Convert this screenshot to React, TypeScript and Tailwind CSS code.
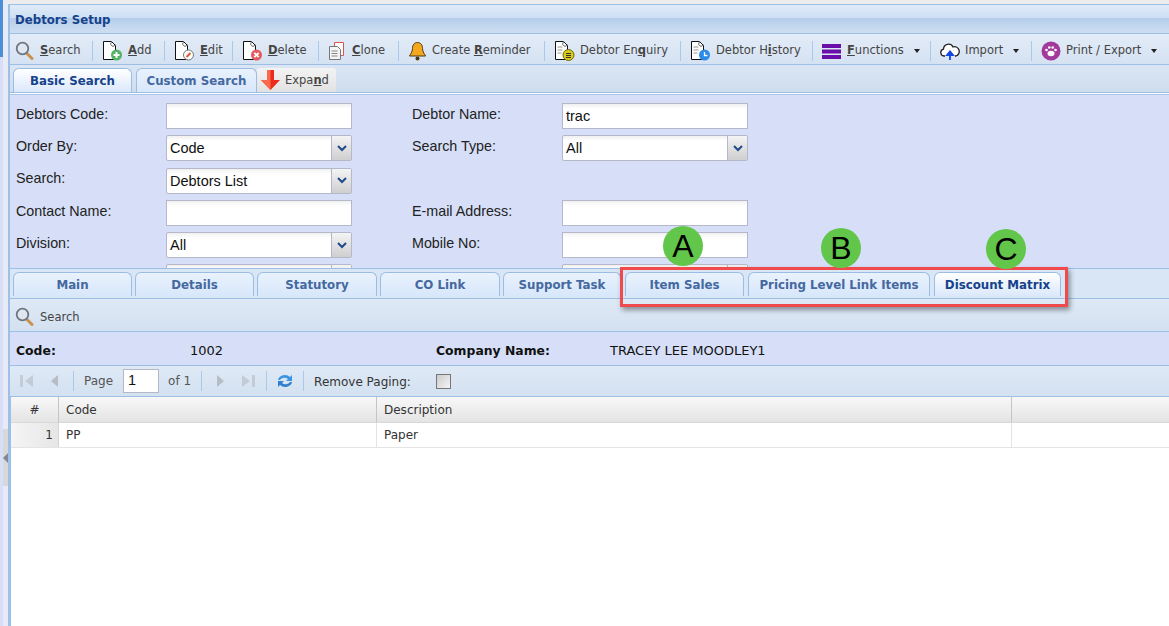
// App.tsx
const Doc = ({ children }: { children?: React.ReactNode }) => (
  <svg width="21" height="21" viewBox="0 0 21 21" className="shrink-0">
    <path d="M1.500 1.500h8l4 4v14h-12z" fill="#fff" stroke="#111" strokeWidth="1" />
    <path d="M9.500 1.500l-1 3 2.500 2 2.500-1.500" fill="none" stroke="#666" strokeWidth="1" />
    {children}
  </svg>
);

const SearchIcon = () => (
  <svg width="20" height="20" viewBox="0 0 20 20" className="shrink-0">
    <path d="M11.500 12l5.500 5.500" stroke="#c9924f" strokeWidth="3" strokeLinecap="round" />
    <circle cx="7.500" cy="7.500" r="5.800" fill="#dfe8f0" stroke="#6d7680" strokeWidth="1.800" />
  </svg>
);

const Caret = () => (
  <span className="ml-[10px] h-0 w-0 border-x-[3.5px] border-t-[4px] border-x-transparent border-t-[#222]" />
);

const U = ({ children }: { children: string }) => (
  <span className="font-bold underline">{children}</span>
);

const toolbar = [
  {
    w: "w-[78px]",
    icon: <SearchIcon />,
    label: (
      <>
        <U>S</U>earch
      </>
    ),
  },
  {
    w: "w-[72px]",
    icon: (
      <Doc>
        <circle cx="14.500" cy="15" r="5.500" fill="#52b365" />
        <path d="M14.500 12v6M11.500 15h6" stroke="#fff" strokeWidth="2" />
      </Doc>
    ),
    label: (
      <>
        <U>A</U>dd
      </>
    ),
  },
  {
    w: "w-[68px]",
    icon: (
      <Doc>
        <circle cx="14.500" cy="15" r="5" fill="#fff" stroke="#777" />
        <path d="M12.500 17l4-4" stroke="#e2572b" strokeWidth="2" />
      </Doc>
    ),
    label: (
      <>
        <U>E</U>dit
      </>
    ),
  },
  {
    w: "w-[86px]",
    icon: (
      <Doc>
        <circle cx="14.500" cy="15" r="5.500" fill="#e55a5f" />
        <path d="M12.300 12.800l4.400 4.400M16.700 12.800l-4.400 4.400" stroke="#fff" strokeWidth="1.800" />
      </Doc>
    ),
    label: (
      <>
        <U>D</U>elete
      </>
    ),
  },
  {
    w: "w-[80px]",
    icon: (
      <svg width="19" height="20" viewBox="0 0 19 20" className="shrink-0">
        <path d="M6.500 1.500h9v13h-9z" fill="#fff" stroke="#d9534f" />
        <path d="M1.500 5.500h8l3 3v10h-11z" fill="#f4f4f4" stroke="#777" />
        <path d="M3.500 10h6M3.500 12.500h6M3.500 15h6" stroke="#888" />
      </svg>
    ),
    label: (
      <>
        <U>C</U>lone
      </>
    ),
  },
  {
    w: "w-[146px]",
    icon: (
      <svg width="19" height="20" viewBox="0 0 19 20" className="shrink-0">
        <path
          d="M9.500 1.500c3.500 0 5 2.800 5 6 0 3.500 2 5.500 3 7.500h-16c1-2 3-4 3-7.500 0-3.200 1.500-6 5-6z"
          fill="#f5a81c"
          stroke="#4a3a12"
        />
        <circle cx="9.500" cy="17.500" r="2" fill="#4a3a12" />
      </svg>
    ),
    label: (
      <>
        Create <U>R</U>eminder
      </>
    ),
  },
  {
    w: "w-[136px]",
    icon: (
      <Doc>
        <path d="M3.500 7h5M3.500 10h5M3.500 13h4" stroke="#999" />
        <circle cx="14.500" cy="15" r="5.500" fill="#d8cb1c" stroke="#6e6a10" />
        <path d="M12 13.500h5M12 15.500h5M12 17.500h5" stroke="#333" />
      </Doc>
    ),
    label: (
      <>
        Debtor En<U>q</U>uiry
      </>
    ),
  },
  {
    w: "w-[132px]",
    icon: (
      <Doc>
        <path d="M3.500 7h5M3.500 10h5M3.500 13h4" stroke="#999" />
        <circle cx="14.500" cy="15" r="5.500" fill="#2a8be8" />
        <path d="M14.500 12v3.500h3" stroke="#fff" strokeWidth="1.300" fill="none" />
      </Doc>
    ),
    label: (
      <>
        Debtor H<U>i</U>story
      </>
    ),
  },
  {
    w: "w-[118px]",
    icon: (
      <svg width="20" height="20" viewBox="0 0 20 20" className="shrink-0">
        <path d="M0 3h19v4H0zM0 8.500h19v4H0zM0 14h19v4H0z" fill="#6a0ea8" />
      </svg>
    ),
    label: (
      <>
        <U>F</U>unctions
      </>
    ),
    caret: true,
  },
  {
    w: "w-[101px]",
    icon: (
      <svg width="20" height="20" viewBox="0 0 20 20" className="shrink-0">
        <path
          d="M5 15H4a3.500 3.500 0 0 1-.5-6.900A5 5 0 0 1 13 6a4.500 4.500 0 0 1 3 9h-1"
          fill="#fff"
          stroke="#222"
          strokeWidth="1.300"
        />
        <path d="M10 19v-7M7 14l3-3.500 3 3.500z" stroke="#1446e0" strokeWidth="1.800" fill="#1446e0" />
      </svg>
    ),
    label: <>Import</>,
    caret: true,
  },
  {
    w: "w-[136px]",
    icon: (
      <svg width="20" height="20" viewBox="0 0 20 20" className="shrink-0">
        <circle cx="10" cy="10" r="9.500" fill="#a3399b" />
        <ellipse cx="10" cy="12.500" rx="3.500" ry="2.800" fill="#fff" />
        <circle cx="5.500" cy="9" r="1.300" fill="#fff" />
        <circle cx="8.300" cy="6.500" r="1.300" fill="#fff" />
        <circle cx="11.700" cy="6.500" r="1.300" fill="#fff" />
        <circle cx="14.500" cy="9" r="1.300" fill="#fff" />
      </svg>
    ),
    label: <>Print / Export</>,
    caret: true,
    last: true,
  },
];

const Input = ({ value = "" }: { value?: string }) => (
  <div className="flex h-[26px] w-[186px] items-center border border-[#b5b8c8] bg-gradient-to-b from-[#f0f0f0] to-white to-[20%] px-[3px] pt-[2px] text-[14.5px] text-[#111]">
    {value}
  </div>
);

const Select = ({ value }: { value: string }) => (
  <div className="flex h-[26px] w-[186px] items-center rounded-[2px] border border-[#b5b8c8] bg-gradient-to-b from-[#f0f0f0] to-white to-[20%] pl-[3px] text-[14.5px] text-[#111]">
    <span className="flex-1 pt-[2px]">{value}</span>
    <span className="flex h-full w-[20px] items-center justify-center border-l border-[#b5b8c8] bg-gradient-to-b from-[#f4f4f4] to-[#cfcfcf]">
      <svg width="10" height="7" viewBox="0 0 10 7">
        <path d="M1 1l4 4 4-4" fill="none" stroke="#1f4a8c" strokeWidth="2" />
      </svg>
    </span>
  </div>
);

const Label = ({ children, className = "" }: { children?: string; className?: string }) => (
  <div className={`-mt-[3px] text-[14.3px] text-[#222] ${className}`}>{children}</div>
);

const bottomTabs = [
  { name: "Main", w: "w-[119px]" },
  { name: "Details", w: "w-[119px]" },
  { name: "Statutory", w: "w-[120px]" },
  { name: "CO Link", w: "w-[120px]" },
  { name: "Support Task", w: "w-[118px]" },
  { name: "Item Sales", w: "w-[119px]", ml: "ml-[4px]" },
  { name: "Pricing Level Link Items", w: "w-[182px]", ml: "ml-[4px]" },
  { name: "Discount Matrix", w: "w-[127px]", ml: "ml-[4px]", active: true },
];

const Tab = ({
  name,
  w,
  ml = "",
  active = false,
}: {
  name: string;
  w: string;
  ml?: string;
  active?: boolean;
}) => (
  <div
    className={`flex h-[24px] items-center justify-center rounded-t-[6px] border border-b-0 border-[#9dbce4] bg-gradient-to-b pt-[2px] text-[11.8px] font-bold ${w} ${ml} ${
      active ? "from-white to-[#dbe8fb] text-[#15428b]" : "from-[#e9f2fd] to-[#d8e7fb] text-[#44689f]"
    }`}
  >
    {name}
  </div>
);

const Sep = ({ ml }: { ml: string }) => <span className={`h-[20px] w-px bg-[#a9c8ec] ${ml}`} />;

export default function App() {
  return (
    <div className="relative flex h-[626px] w-[1169px] overflow-hidden bg-[#ececec] font-['Liberation_Sans',sans-serif]">
      {/* left strip */}
      <div className="flex w-[8px] shrink-0">
        <div className="flex w-[3px] flex-col bg-[#d6dff7]">
          <div className="h-[57px] bg-[#4a90d9]" />
        </div>
        <div className="flex w-[5px] flex-col bg-[#e8eaf5] pt-[429px]">
          <div className="flex h-[57px] items-center justify-center bg-[#d8d8d8]">
            <span className="h-0 w-0 border-y-[5px] border-r-[5px] border-y-transparent border-r-[#7f8894]" />
          </div>
        </div>
      </div>

      <div className="mt-[4px] flex min-w-0 flex-1 flex-col border-t border-l-2 border-[#9dc0e8] bg-white">
        {/* title */}
        <div className="flex h-[28px] shrink-0 items-center bg-[linear-gradient(180deg,#e0ebf8_0%,#cddff3_46%,#b5cdeb_47%,#cfdff2_100%)] pl-[5px] pt-[3px] font-['DejaVu_Sans',sans-serif] text-[11.75px] font-bold text-[#15428b]">
          Debtors Setup
        </div>

        {/* toolbar */}
        <div className="flex h-[32px] shrink-0 items-center border-y border-[#9dbfe6] bg-gradient-to-b from-[#e3ecf8] to-[#d5e2f2] pl-[5px] pt-[3px] font-['DejaVu_Sans',sans-serif] text-[11.5px] text-[#444]">
          {toolbar.map((item, i) => (
            <div key={i} className={`flex h-[20px] shrink-0 items-center ${item.w} ${item.last ? "" : "border-r border-[#a9c8ec]"} ${i ? "pl-[9px]" : ""}`}>
              {item.icon}
              <span className="ml-[5px] whitespace-nowrap pt-[1px]">{item.label}</span>
              {item.caret && <Caret />}
            </div>
          ))}
        </div>

        {/* search tabs */}
        <div className="flex h-[28px] shrink-0 items-end border-b border-[#9dbfe6] bg-gradient-to-b from-[#dae6f4] to-[#cedded] pl-[3px] font-['DejaVu_Sans',sans-serif]">
          <Tab name="Basic Search" w="w-[119px]" active />
          <Tab name="Custom Search" w="w-[121px]" ml="ml-[4px]" />
          <div className="flex h-[24px] w-[79px] items-center rounded-t-[3px] bg-gradient-to-b from-[#f3f3f3] to-[#e2e2e2] pl-[4px] text-[11.5px] text-[#444]">
            <svg width="20" height="22" viewBox="0 0 20 22" className="shrink-0">
              <path d="M6 1h7v10h6l-9.500 10L0 11h6z" fill="#ee2a1c" />
              <path d="M6 1h3.500v20L0 11h6z" fill="#f86a4c" />
            </svg>
            <span className="ml-[4px] pt-[2px]">
              Expa<U>n</U>d
            </span>
          </div>
        </div>

        {/* form */}
        <div className="mt-[1px] flex h-[174px] shrink-0 flex-col gap-[6.3px] overflow-hidden border-t border-[#a9c8ec] bg-[#d6dff7] pl-[6px] pt-[8px]">
          <div className="flex h-[26px] shrink-0 items-center">
            <Label className="w-[150px]">Debtors Code:</Label>
            <Input />
            <Label className="ml-[60px] w-[150px]">Debtor Name:</Label>
            <Input value="trac" />
          </div>
          <div className="flex h-[26px] shrink-0 items-center">
            <Label className="w-[150px]">Order By:</Label>
            <Select value="Code" />
            <Label className="ml-[60px] w-[151px]">Search Type:</Label>
            <div className="-ml-px">
              <Select value="All" />
            </div>
          </div>
          <div className="flex h-[26px] shrink-0 items-center">
            <Label className="w-[150px]">Search:</Label>
            <Select value="Debtors List" />
          </div>
          <div className="flex h-[26px] shrink-0 items-center">
            <Label className="w-[150px]">Contact Name:</Label>
            <Input />
            <Label className="ml-[60px] w-[150px]">E-mail Address:</Label>
            <Input />
          </div>
          <div className="flex h-[26px] shrink-0 items-center">
            <Label className="w-[150px]">Division:</Label>
            <Select value="All" />
            <Label className="ml-[60px] w-[150px]">Mobile No:</Label>
            <Input />
          </div>
          <div className="flex h-[26px] shrink-0 items-center">
            <Label className="w-[150px]" />
            <Select value="" />
            <Label className="ml-[60px] w-[150px]" />
            <Select value="" />
          </div>
        </div>

        {/* record tabs */}
        <div className="flex h-[31px] shrink-0 items-end border-y border-[#9dbfe6] bg-[#d9e6f6] pb-[2px] pl-[3px] font-['DejaVu_Sans',sans-serif]">
          {bottomTabs.map((t, i) => (
            <Tab key={t.name} {...t} ml={t.ml ?? (i ? "ml-[3px]" : "")} />
          ))}
        </div>

        {/* search bar */}
        <div className="flex h-[33px] shrink-0 items-center border-b border-[#9dbfe6] bg-gradient-to-b from-[#dfe9f6] to-[#d3e1f0] pl-[5px] pt-[3px] font-['DejaVu_Sans',sans-serif] text-[11.5px] text-[#444]">
          <SearchIcon />
          <span className="ml-[5px] pt-[2px]">Search</span>
        </div>

        {/* info */}
        <div className="flex h-[33px] shrink-0 items-center bg-[#d6dff7] pl-[6px] pt-[5px] font-['DejaVu_Sans',sans-serif] text-[13px] text-[#111]">
          <span className="w-[174px] text-[12.4px] font-bold">Code:</span>
          <span className="w-[246px]">1002</span>
          <span className="w-[174px] text-[12.4px] font-bold">Company Name:</span>
          <span>TRACEY LEE MOODLEY1</span>
        </div>

        {/* pager */}
        <div className="flex h-[32px] shrink-0 items-center border-y border-[#9dbfe6] bg-gradient-to-b from-[#dfe9f6] to-[#d3e1f0] pl-[9px] font-['DejaVu_Sans',sans-serif] text-[12px] text-[#555]">
          <svg width="16" height="14" viewBox="0 0 16 14"><path d="M1 1h3v12H1zM14 1v12L6 7z" fill="#c3ccd6" /></svg>
          <svg width="14" height="14" viewBox="0 0 14 14" className="ml-[13px]"><path d="M10 1v12L3 7z" fill="#b5bdc7" /></svg>
          <Sep ml="ml-[11px]" />
          <span className="ml-[10px]">Page</span>
          <div className="ml-[10px] flex h-[24px] w-[36px] items-center border border-[#b5b8c8] bg-white px-1 font-['Liberation_Sans',sans-serif] text-[14.5px] text-[#111]">
            1
          </div>
          <span className="ml-[9px]">of 1</span>
          <Sep ml="ml-[10px]" />
          <svg width="14" height="14" viewBox="0 0 14 14" className="ml-[11px]"><path d="M4 1v12l7-6z" fill="#b5bdc7" /></svg>
          <svg width="16" height="14" viewBox="0 0 16 14" className="ml-[13px]"><path d="M2 1v12l8-6zM12 1h3v12h-3z" fill="#c3ccd6" /></svg>
          <Sep ml="ml-[10px]" />
          <svg width="18" height="18" viewBox="0 0 18 18" className="ml-[9px]">
            <path d="M2 8a7 6 0 0 1 12-3l2-2v6h-6l2-2a5 4 0 0 0-8 1z" fill="#3d94e0" />
            <path d="M16 10a7 6 0 0 1-12 3l-2 2V9h6l-2 2a5 4 0 0 0 8-1z" fill="#2f80cf" />
          </svg>
          <Sep ml="ml-[9px]" />
          <span className="ml-[10px] pt-[1px] text-[#333]">Remove Paging:</span>
          <span className="ml-[25px] h-[15px] w-[15px] border border-[#777] bg-gradient-to-br from-[#ccc] to-[#f4f4f4]" />
        </div>

        {/* grid */}
        <div className="flex flex-1 flex-col border-l border-[#9dc0e8] font-['DejaVu_Sans',sans-serif] text-[12px] text-[#333]">
          <div className="flex h-[26px] shrink-0 items-center border-b border-[#d8d8d8] bg-gradient-to-b from-[#f8f8f8] to-[#e4e4e4]">
            <div className="flex h-full w-[48px] items-center justify-center border-r border-[#c5c5c5]">#</div>
            <div className="flex h-full w-[318px] items-center border-r border-[#c5c5c5] pl-[7px]">Code</div>
            <div className="flex h-full w-[635px] items-center border-r border-[#c5c5c5] pl-[7px]">Description</div>
          </div>
          <div className="flex h-[25px] shrink-0 items-center border-b border-[#e4e4e4] bg-white">
            <div className="flex h-full w-[48px] items-center justify-end border-r border-[#d5d5d5] bg-gradient-to-r from-[#f5f5f5] to-[#e6e6e6] pr-[5px]">1</div>
            <div className="flex h-full w-[318px] items-center border-r border-[#e4e4e4] pl-[7px]">PP</div>
            <div className="flex h-full w-[635px] items-center border-r border-[#e4e4e4] pl-[7px]">Paper</div>
          </div>
          <div className="flex-1 bg-white" />
        </div>
      </div>

      {/* callout */}
      <div className="absolute left-[620px] top-[267px] h-[40px] w-[448px] border-[3px] border-[#f04a4c] shadow-[2px_3px_5px_rgba(0,0,0,0.4)]" />
      {[
        { t: "A", pos: "left-[663px] top-[226px]" },
        { t: "B", pos: "left-[821px] top-[228px]" },
        { t: "C", pos: "left-[986px] top-[229px]" },
      ].map((b) => (
        <div
          key={b.t}
          className={`absolute flex h-[40px] w-[40px] items-center justify-center rounded-full bg-[#62c64a] text-[32px] leading-none text-black ${b.pos}`}
        >
          {b.t}
        </div>
      ))}
    </div>
  );
}
